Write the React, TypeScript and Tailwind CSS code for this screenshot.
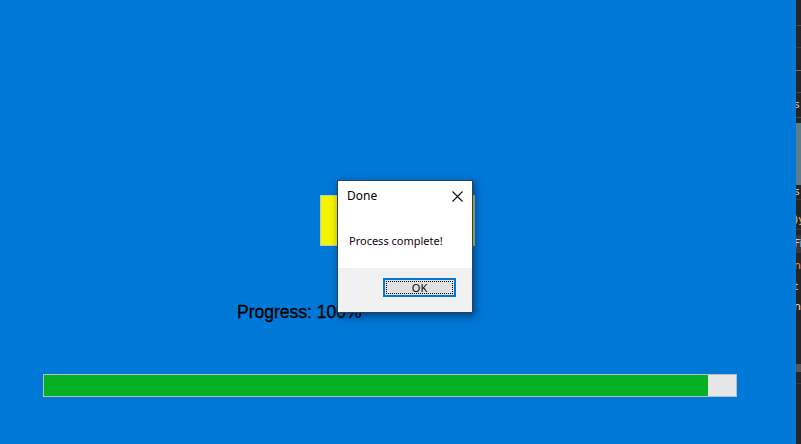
import React from "react";

function Line({ c }: { c: string }) {
  return <div className={`h-px shrink-0 ${c}`} />;
}

function Frag({ text, color, h }: { text: string; color: string; h: string }) {
  return (
    <div className={`shrink-0 flex items-center -ml-[2px] whitespace-nowrap ${h} ${color}`}>{text}</div>
  );
}

function Strip() {
  return (
    <div className="w-[5px] h-[444px] bg-[#252526] overflow-hidden shrink-0 flex flex-col text-[11px] leading-[12px] font-['DejaVu_Sans',sans-serif]">
      <div className="h-[25px] shrink-0" />
      <Line c="bg-[#4a4a4a]" />
      <div className="h-[21px] shrink-0" />
      <Line c="bg-[#3a3a3a]" />
      <div className="h-[22px] shrink-0" />
      <Line c="bg-[#6a6a6a]" />
      <div className="h-[21px] shrink-0" />
      <Line c="bg-[#4a4a4a]" />
      <Frag text="s" color="text-[#cccccc]" h="h-[24px]" />
      <Line c="bg-[#4a4a4a]" />
      <div className="h-[5px] shrink-0" />
      <div className="h-[62px] shrink-0 bg-[#5d7b89]" />
      <Frag text="s" color="text-[#cccccc]" h="h-[14px]" />
      <Line c="bg-[#3a3a3a]" />
      <div className="h-[11px] shrink-0" />
      <Frag text=")y" color="text-[#e0c080]" h="h-[18px]" />
      <Line c="bg-[#3a3a3a]" />
      <div className="h-[5px] shrink-0" />
      <Frag text="Fi" color="text-[#cccccc] bg-[#37373d]" h="h-[18px]" />
      <Frag text="n" color="text-[#e0a060]" h="h-[26px]" />
      <Frag text="t" color="text-[#d0d0d0]" h="h-[16px]" />
      <Frag text="n" color="text-[#e8e8e8]" h="h-[24px]" />
      <div className="h-[45px] shrink-0" />
      <div className="h-[8px] shrink-0 bg-[#555555]" />
      <div className="h-[11px] shrink-0" />
      <Line c="bg-[#3a3a3a]" />
    </div>
  );
}

function Dialog() {
  return (
    <div className="absolute left-[337px] top-[180px] w-[136px] h-[133px] bg-white border border-[#2d3f55] shadow-[2px_3px_8px_rgba(0,20,50,0.55)] flex flex-col font-['Noto_Sans',sans-serif] text-black">
      <div className="h-[30px] flex items-center justify-between pl-[9px] pr-[9px] shrink-0">
        <span className="text-[12px] leading-none">Done</span>
        <svg width="11" height="11" viewBox="0 0 11 11" className="mt-px">
          <path d="M0.5 0.5 L10.5 10.5 M10.5 0.5 L0.5 10.5" stroke="#111" strokeWidth="1.1" />
        </svg>
      </div>
      <div className="h-[57px] flex items-center pl-[11px] pt-[2px] shrink-0">
        <span className="text-[11px] leading-none text-[#1a0010]">Process complete!</span>
      </div>
      <div className="flex-1 bg-[#f0f0f0] flex justify-end items-start pt-[10px] pr-[16px]">
        <div className="w-[73px] h-[19px] border-2 border-[#0078d7] bg-[#e1e1e1] p-px">
          <div className="w-full h-full border border-dotted border-black flex items-center justify-center text-[11px] leading-none">
            OK
          </div>
        </div>
      </div>
    </div>
  );
}

export default function App() {
  return (
    <div className="w-[801px] h-[444px] flex overflow-hidden">
      <div className="relative flex-1 bg-[#0078d7] flex flex-col">
        <div className="mt-[195px] ml-[320px] w-[155px] h-[51px] border border-[#c8c8b0] bg-[linear-gradient(90deg,#f4f400,#ffff00_40%,#f0ee00)]" />
        <div className="mt-[57px] ml-[237px] h-[18px] leading-[18px] text-[17.5px] text-black font-['Liberation_Sans',sans-serif] [-webkit-text-stroke:0.35px_black]">
          Progress: 100%
        </div>
        <div className="mt-[53px] ml-[43px] w-[694px] h-[23px] border border-[#bcbcbc] bg-[#e6e6e6]">
          <div className="h-full w-[664px] bg-[#06b025]" />
        </div>
        <Dialog />
      </div>
      <Strip />
    </div>
  );
}
